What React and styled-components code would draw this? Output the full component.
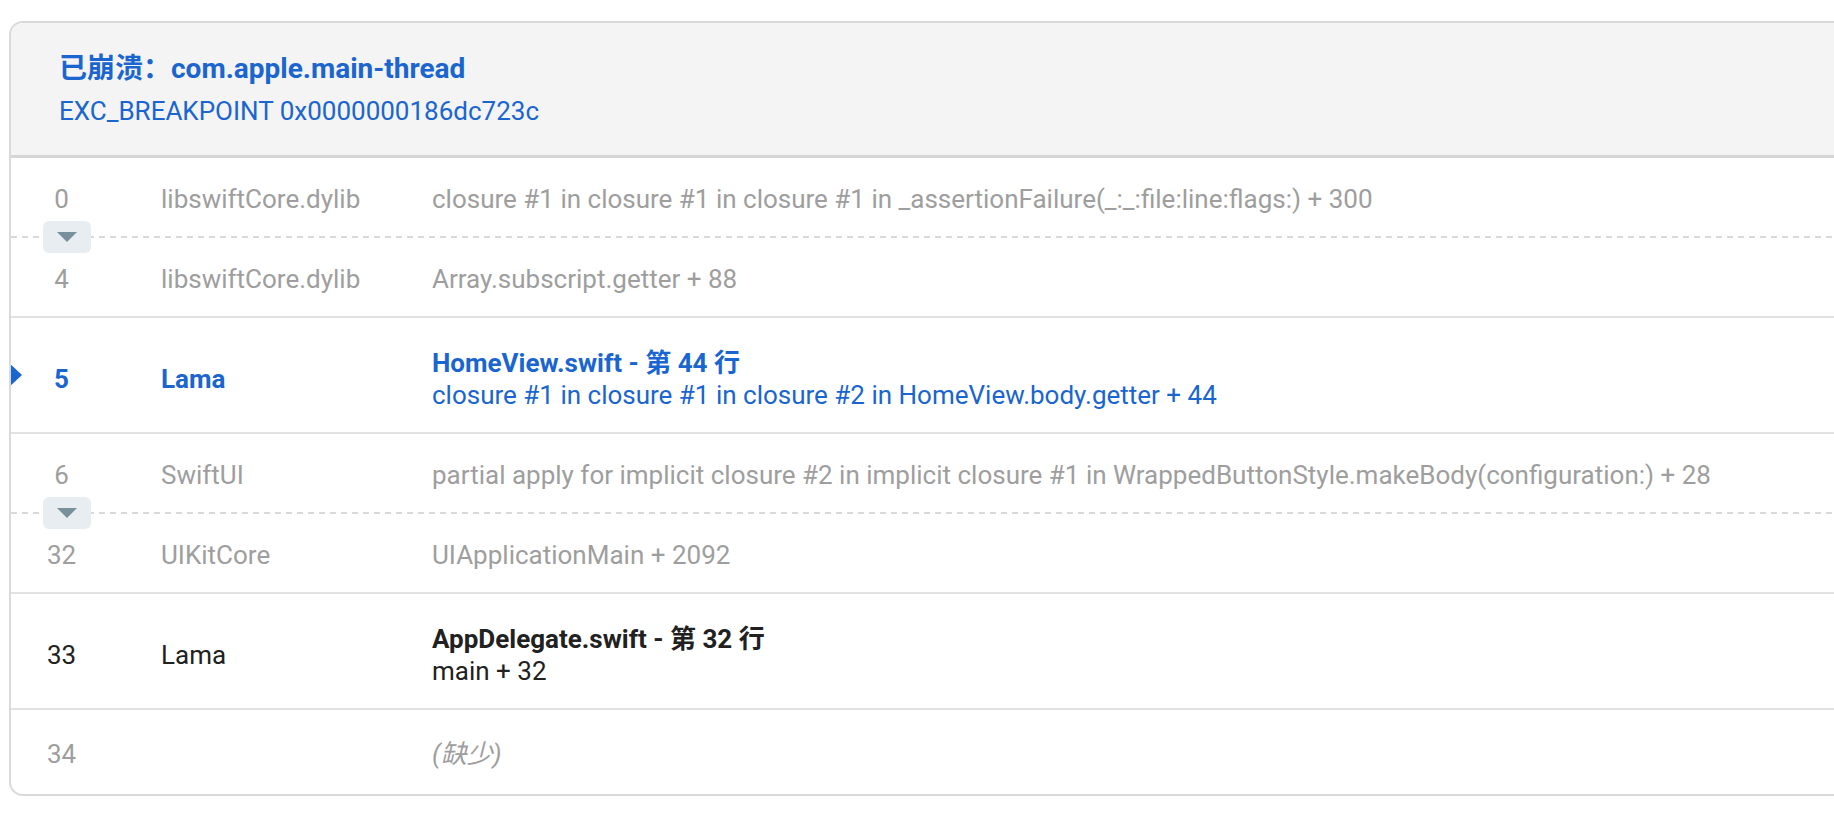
import React from 'react';
import styled, { createGlobalStyle } from 'styled-components';

const GlobalStyle = createGlobalStyle`
  body {
    margin: 0;
    background: #ffffff;
    overflow: hidden;
    font-family: Roboto, "Noto Sans CJK SC", sans-serif;
  }
`;

const BLUE = '#1a65cf';
const GRAY = '#9e9e9e';
const DARK = '#212121';

const Page = styled.div`
  padding: 21px 0 0 9px;
`;

const Card = styled.div`
  width: 1900px;
  border: 2px solid #dadada;
  border-radius: 14px;
  overflow: hidden;
  background: #ffffff;
`;

const Header = styled.div`
  background: #f4f4f4;
  padding: 28px 48px 26px;
  border-bottom: 3px solid #d6d6d6;
`;

const Title = styled.div`
  font-size: 28px;
  font-weight: 700;
  line-height: 36px;
  color: ${BLUE};
`;

const Subtitle = styled.div`
  margin-top: 6px;
  font-size: 26px;
  line-height: 36px;
  color: ${BLUE};
`;

const rowPadding = ({ $double, $last }) => {
  if ($double) return '29px 0 21px';
  if ($last) return '28px 0 24px';
  return '25px 0 21px';
};

const Row = styled.div`
  position: relative;
  display: grid;
  grid-template-columns: 101px 320px 1fr;
  align-items: center;
  padding: ${rowPadding};
  font-size: 26px;
  line-height: 32px;
  color: ${({ $tone }) => ($tone === 'blue' ? BLUE : $tone === 'dark' ? DARK : GRAY)};
  font-weight: ${({ $tone }) => ($tone === 'blue' ? 700 : 400)};
  border-bottom: ${({ $plain }) => ($plain ? 'none' : '2px solid #e2e2e2')};
`;

const Num = styled.div`
  text-align: center;
`;

const Module = styled.div`
  padding-left: 49px;
`;

const Func = styled.div`
  white-space: nowrap;
  font-weight: 400;
`;

const FileLine = styled.div`
  font-weight: 700;
`;

const Missing = styled.span`
  font-style: italic;
`;

// current frame pointer on the left edge of the card
const Marker = styled.div`
  position: absolute;
  left: -2px;
  top: 50%;
  margin-top: -12px;
  width: 0;
  height: 0;
  border-top: 12.5px solid transparent;
  border-bottom: 12.5px solid transparent;
  border-left: 13px solid ${BLUE};
`;

const Collapsed = styled.div`
  position: relative;
  height: 2px;
  background-image: repeating-linear-gradient(
    to right,
    #d9d9d9 0,
    #d9d9d9 6px,
    transparent 6px,
    transparent 11px
  );
`;

const ExpandButton = styled.button`
  position: absolute;
  left: 32px;
  top: -15px;
  width: 48px;
  height: 32px;
  border: none;
  border-radius: 6px;
  background: #e8edf1;
  padding: 0;
  display: flex;
  align-items: center;
  justify-content: center;
  cursor: pointer;

  &::after {
    content: '';
    width: 0;
    height: 0;
    border-left: 10px solid transparent;
    border-right: 10px solid transparent;
    border-top: 10px solid #78909c;
  }
`;

const frames = [
  {
    n: '0',
    mod: 'libswiftCore.dylib',
    lines: ['closure #1 in closure #1 in closure #1 in _assertionFailure(_:_:file:line:flags:) + 300'],
    collapsedAfter: true,
  },
  { n: '4', mod: 'libswiftCore.dylib', lines: ['Array.subscript.getter + 88'] },
  {
    n: '5',
    mod: 'Lama',
    tone: 'blue',
    current: true,
    file: 'HomeView.swift - 第 44 行',
    lines: ['closure #1 in closure #1 in closure #2 in HomeView.body.getter + 44'],
  },
  {
    n: '6',
    mod: 'SwiftUI',
    lines: ['partial apply for implicit closure #2 in implicit closure #1 in WrappedButtonStyle.makeBody(configuration:) + 28'],
    collapsedAfter: true,
  },
  { n: '32', mod: 'UIKitCore', lines: ['UIApplicationMain + 2092'] },
  { n: '33', mod: 'Lama', tone: 'dark', file: 'AppDelegate.swift - 第 32 行', lines: ['main + 32'] },
  { n: '34', mod: '', missing: true, last: true },
];

const App = () => {
  return (
    <Page>
      <GlobalStyle />
      <Card>
        <Header>
          <Title>已崩溃：com.apple.main-thread</Title>
          <Subtitle>EXC_BREAKPOINT 0x0000000186dc723c</Subtitle>
        </Header>
        {frames.map(f => (
          <React.Fragment key={f.n}>
            <Row
              $tone={f.tone}
              $double={!!f.file}
              $last={f.last}
              $plain={f.last || f.collapsedAfter}
            >
              {f.current && <Marker />}
              <Num>{f.n}</Num>
              <Module>{f.mod}</Module>
              <Func>
                {f.file && <FileLine>{f.file}</FileLine>}
                {f.missing ? <Missing>(缺少)</Missing> : f.lines.map(l => <div key={l}>{l}</div>)}
              </Func>
            </Row>
            {f.collapsedAfter && (
              <Collapsed>
                <ExpandButton aria-label="展开" />
              </Collapsed>
            )}
          </React.Fragment>
        ))}
      </Card>
    </Page>
  );
};

export default App;
